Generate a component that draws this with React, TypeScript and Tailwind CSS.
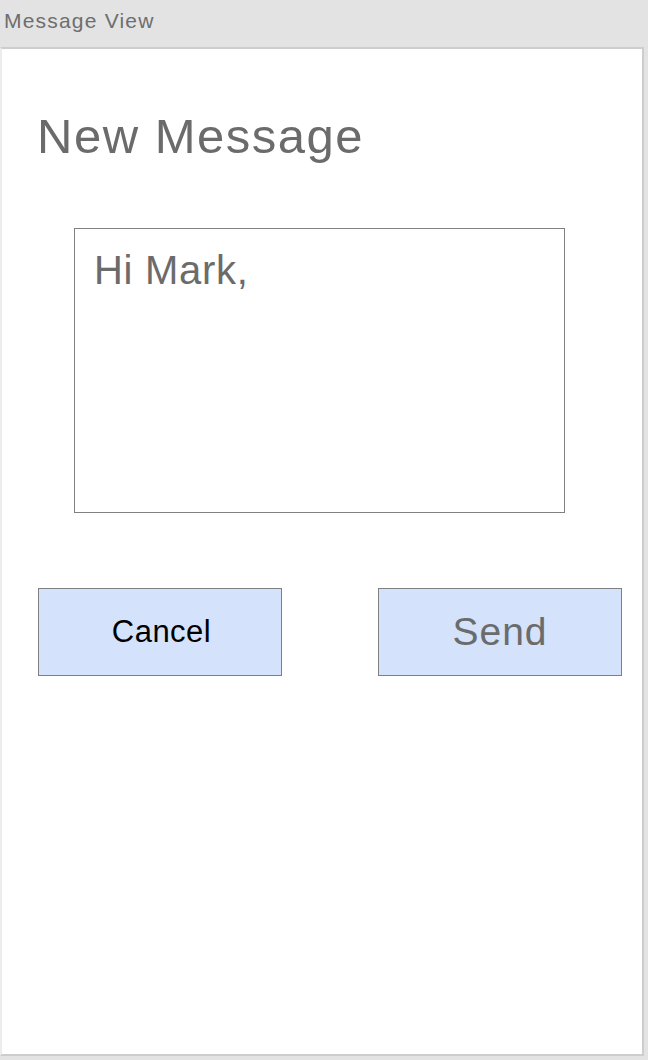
export default function App() {
  return (
    <div className="flex h-[1060px] w-[648px] flex-col bg-[#e3e3e3] font-['Liberation_Sans',Arial,sans-serif]">
      <div className="flex h-[47px] shrink-0 items-center pl-[4px] pb-[6px] text-[21px] tracking-[1.2px] text-[#6e6e6e]">
        Message View
      </div>
      <div className="flex h-[1009px] w-[644px] flex-col border-2 border-[#cdcdcd] border-l-[#ececec] bg-white">
        <h1 className="ml-[35px] mt-[63px] text-[49px] leading-none tracking-[1.5px] text-[#6b6b6b]">
          New Message
        </h1>
        <div className="ml-[72px] mt-[67px] h-[285px] w-[491px] border border-[#808080] pl-[19px] pt-[21px]">
          <p className="text-[40px] leading-none tracking-[0.7px] text-[#6b6b6b]">Hi Mark,</p>
        </div>
        <div className="ml-[36px] mt-[75px] flex gap-[96px]">
          <button className="flex h-[88px] w-[244px] items-center justify-center border border-[#7f7f7f] bg-[#d4e2fb] pl-[3px] text-[31px] tracking-[0.5px] text-black">
            Cancel
          </button>
          <button className="flex h-[88px] w-[244px] items-center justify-center border border-[#7f7f7f] bg-[#d4e2fb] text-[39px] tracking-[1px] text-[#6b6b6b]">
            Send
          </button>
        </div>
      </div>
    </div>
  );
}
